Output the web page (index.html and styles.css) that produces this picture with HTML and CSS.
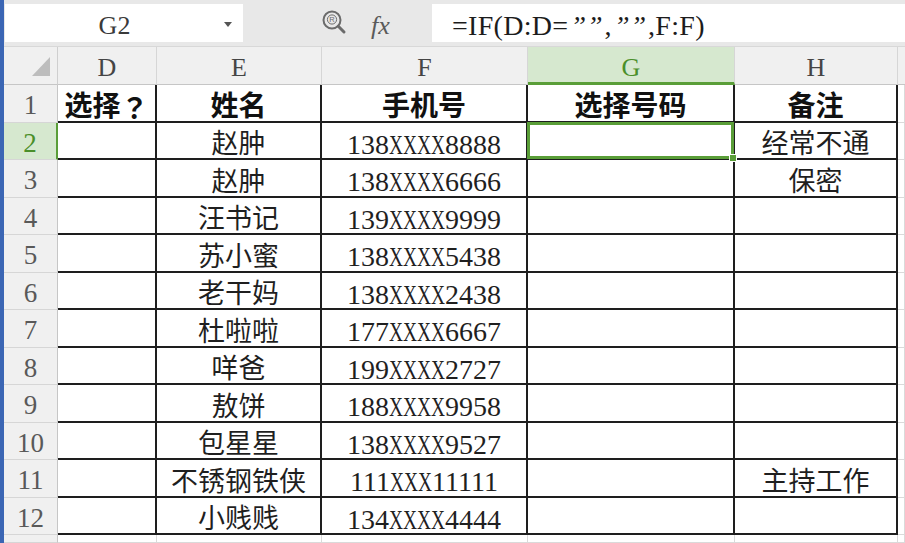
FILE: index.html
```html
<!DOCTYPE html>
<html lang="zh-CN">
<head>
<meta charset="utf-8">
<title>Sheet</title>
<link rel="stylesheet" href="styles.css">
</head>
<body>
<div class="edge"></div>
<div class="main">
  <div class="topbar">
    <div class="namebox"><span class="ref">G2</span><span class="drop"></span></div>
    <div class="tools">
      <svg class="zoomicon" width="26" height="26" viewBox="0 0 26 26">
        <circle cx="11" cy="11" r="8.5" fill="none" stroke="#6b6b6b" stroke-width="2"/>
        <line x1="17.3" y1="17.3" x2="23" y2="23" stroke="#6b6b6b" stroke-width="3" stroke-linecap="round"/>
        <circle cx="11" cy="10.5" r="4.6" fill="none" stroke="#6b6b6b" stroke-width="1"/>
        <text x="11" y="13.2" font-size="7.5" text-anchor="middle" fill="#6b6b6b" font-family="Liberation Sans, sans-serif">R</text>
      </svg>
      <span class="fx">fx</span>
    </div>
    <div class="formula">=IF(D:D=<span class="q">””</span>,<span class="q">””</span>,F:F)</div>
  </div>
  <div class="sheet">
    <div class="corner"><svg width="54" height="38" viewBox="0 0 54 38"><polygon points="46,10 46,29 28,29" fill="#bdbdbd"/></svg></div>
    <div class="ch">D</div><div class="ch">E</div><div class="ch">F</div><div class="ch ch-sel">G</div><div class="ch">H</div><div class="ch ch-out"></div>

    <div class="rh">1</div><div class="c b">选择<span class="fw">？</span></div><div class="c b">姓名</div><div class="c b">手机号</div><div class="c b">选择号码</div><div class="c b">备注</div><div class="o"></div>

    <div class="rh rh-sel">2</div><div class="c"></div><div class="c">赵肿</div><div class="c n">138<span class="x x4">XXXX</span>8888</div><div class="c cur"><div class="sel"><span class="handle"></span></div></div><div class="c">经常不通</div><div class="o"></div>

    <div class="rh">3</div><div class="c"></div><div class="c">赵肿</div><div class="c n">138<span class="x x4">XXXX</span>6666</div><div class="c"></div><div class="c">保密</div><div class="o"></div>

    <div class="rh">4</div><div class="c"></div><div class="c">汪书记</div><div class="c n">139<span class="x x4">XXXX</span>9999</div><div class="c"></div><div class="c"></div><div class="o"></div>

    <div class="rh">5</div><div class="c"></div><div class="c">苏小蜜</div><div class="c n">138<span class="x x4">XXXX</span>5438</div><div class="c"></div><div class="c"></div><div class="o"></div>

    <div class="rh">6</div><div class="c"></div><div class="c">老干妈</div><div class="c n">138<span class="x x4">XXXX</span>2438</div><div class="c"></div><div class="c"></div><div class="o"></div>

    <div class="rh">7</div><div class="c"></div><div class="c">杜啦啦</div><div class="c n">177<span class="x x4">XXXX</span>6667</div><div class="c"></div><div class="c"></div><div class="o"></div>

    <div class="rh">8</div><div class="c"></div><div class="c">咩爸</div><div class="c n">199<span class="x x4">XXXX</span>2727</div><div class="c"></div><div class="c"></div><div class="o"></div>

    <div class="rh">9</div><div class="c"></div><div class="c">敖饼</div><div class="c n">188<span class="x x4">XXXX</span>9958</div><div class="c"></div><div class="c"></div><div class="o"></div>

    <div class="rh">10</div><div class="c"></div><div class="c">包星星</div><div class="c n">138<span class="x x4">XXXX</span>9527</div><div class="c"></div><div class="c"></div><div class="o"></div>

    <div class="rh">11</div><div class="c"></div><div class="c">不锈钢铁侠</div><div class="c n">111<span class="x x3">XXX</span>11111</div><div class="c"></div><div class="c">主持工作</div><div class="o"></div>

    <div class="rh">12</div><div class="c"></div><div class="c">小贱贱</div><div class="c n">134<span class="x x4">XXXX</span>4444</div><div class="c"></div><div class="c"></div><div class="o"></div>

    <div class="rh"></div><div class="o"></div><div class="o"></div><div class="o"></div><div class="o"></div><div class="o"></div><div class="o"></div>
  </div>
</div>
</body>
</html>
```

FILE: styles.css
```css
* { box-sizing: border-box; margin: 0; padding: 0; }
html, body { width: 905px; height: 543px; overflow: hidden; }
body {
  display: flex;
  background: #fff;
  font-family: "Liberation Serif", "Noto Sans CJK SC", serif;
  color: #1c1c1c;
}
.edge { width: 4px; flex: none; background: #3b66b4; }
.main { flex: 1; display: flex; flex-direction: column; min-width: 0; }

.topbar {
  height: 47px;
  flex: none;
  display: flex;
  background: #e8e8e8;
  padding: 4px 0 4px 1px;
  border-bottom: 1px solid #d8d8d8;
}
.namebox {
  width: 238px;
  background: #fff;
  display: flex;
  align-items: center;
}
.namebox .ref {
  flex: 1;
  text-align: center;
  font-size: 26px;
  color: #3a3a3a;
  line-height: 1;
  padding-top: 6px;
}
.namebox .drop {
  width: 0; height: 0;
  border-left: 4px solid transparent;
  border-right: 4px solid transparent;
  border-top: 5px solid #555;
  margin: 2px 11px 0 0;
}
.tools {
  width: 189px;
  display: flex;
  align-items: center;
  padding-left: 78px;
  gap: 24px;
}
.zoomicon { margin-top: -3px; }
.fx {
  font-style: italic;
  font-size: 26px;
  color: #5a5a5a;
  line-height: 1;
  padding-top: 6px;
}
.formula {
  flex: 1;
  background: #fff;
  display: flex;
  align-items: center;
  padding: 6px 0 0 20px;
  font-size: 28px;
  letter-spacing: 0.3px;
  color: #1c1c1c;
  white-space: pre;
  line-height: 1;
}
.formula .q { font-style: italic; letter-spacing: 1px; margin: 0 1px 0 2px; }

.sheet {
  flex: 1;
  display: grid;
  grid-template-columns: 54px 99px 165px 206px 207px 163px 1fr;
  grid-template-rows: 38px repeat(12, 37.5px) 1fr;
}
.corner, .ch, .rh {
  background: #f0f0f0;
}
.corner {
  border-right: 1px solid #cfcfcf;
  border-bottom: 1px solid #c6c6c6;
}
.corner svg { display: block; }
.ch {
  display: flex;
  align-items: center;
  justify-content: center;
  font-size: 26px;
  color: #454545;
  border-right: 1px solid #d6d6d6;
  border-bottom: 1px solid #c6c6c6;
  line-height: 1;
  padding-top: 5px;
}
.ch-sel {
  background: #d6e8cf;
  color: #4a8f2a;
  border-bottom: 3px solid #5a9e38;
  padding-top: 7px;
}
.ch-out { border-right: none; }
.rh {
  display: flex;
  align-items: center;
  justify-content: center;
  font-size: 27px;
  color: #595959;
  border-right: 1px solid #c6c6c6;
  border-bottom: 1px solid #d6d6d6;
  line-height: 1;
  padding-top: 5px;
}
.rh-sel {
  background: #d6e8cf;
  color: #4a8f2a;
  border-right: 2px solid #5a9e38;
}
.c {
  display: flex;
  align-items: center;
  justify-content: center;
  border-right: 2px solid #1e1e1e;
  border-bottom: 2px solid #1e1e1e;
  font-size: 27px;
  line-height: 1;
  white-space: nowrap;
  color: #1f1f1f;
  padding-top: 9px;
}
.c.b { font-weight: 700; font-size: 28px; color: #111; padding-top: 8px; }
.c.n { font-size: 28px; padding-top: 9px; }
.fw { font-family: "Noto Sans CJK TC", "Noto Sans CJK SC", sans-serif; }
.x {
  display: inline-block;
  transform: scaleX(0.693);
  transform-origin: left center;
}
.x4 { margin-right: -0.887em; }
.x3 { margin-right: -0.665em; }
.o {
  border-right: 1px solid #dadada;
  border-bottom: 1px solid #dadada;
}
.cur { position: relative; }
.sel {
  position: absolute;
  top: -1px; left: -1px; right: -1px; bottom: -1px;
  border: 3px solid #5a9e38;
}
.handle {
  position: absolute;
  right: -6px; bottom: -6px;
  width: 8px; height: 8px;
  background: #5a9e38;
  border: 1px solid #fff;
}
```
